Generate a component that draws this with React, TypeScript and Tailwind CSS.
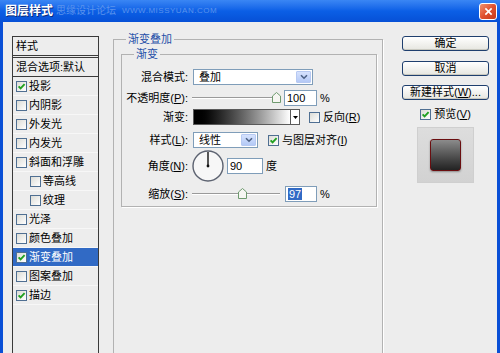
import clsx from 'clsx'

const font = "font-['Liberation_Sans','Noto_Sans_CJK_SC',sans-serif]"

const CheckBox = ({ checked, className }: { checked?: boolean; className?: string }) => (
  <span
    className={clsx(
      'inline-flex h-[11px] w-[11px] shrink-0 items-center justify-center border border-[#4f6f92] bg-gradient-to-br from-[#dcdcd6] to-white',
      className
    )}
  >
    {checked && (
      <svg viewBox="0 0 9 9" className="h-[9px] w-[9px]">
        <path d="M1.6 4.3 L3.6 6.4 L7.6 2.2" stroke="#21a121" strokeWidth="1.9" fill="none" />
      </svg>
    )}
  </span>
)

const Key = ({ k }: { k: string }) => (
  <>
    (<u>{k}</u>)
  </>
)

const Chevron = () => (
  <span className="flex h-full w-[15px] items-center justify-center rounded-[1px] border border-[#b7c9f2] bg-gradient-to-b from-[#d6e2fd] to-[#b4c9f6]">
    <svg viewBox="0 0 8 6" className="h-[6px] w-[8px]">
      <path d="M1 1.2 L4 4.2 L7 1.2" stroke="#4d6185" strokeWidth="1.6" fill="none" />
    </svg>
  </span>
)

const Select = ({ value, className }: { value: string; className: string }) => (
  <div
    className={clsx(
      'flex h-[16px] items-center justify-between border border-[#7f9db9] bg-white p-[1px]',
      className
    )}
  >
    <span className="pl-[4px] leading-none">{value}</span>
    <Chevron />
  </div>
)

const Field = ({ value, className, selected }: { value: string; className: string; selected?: boolean }) => (
  <div className={clsx('flex h-[16px] items-center border border-[#7f9db9] bg-white pl-[2px]', className)}>
    <span className={clsx('leading-[12px]', selected && 'bg-[#316ac5] px-[1px] text-white')}>{value}</span>
  </div>
)

const Slider = ({ pos }: { pos: number }) => (
  <div className="relative ml-[4px] h-[16px] w-[88px]">
    <div className="absolute top-[7px] right-0 left-0 h-[2px] border-t border-[#9a9a9a] border-b border-b-white" />
    <svg viewBox="0 0 9 11" className="absolute top-[2px] h-[11px] w-[9px]" style={{ left: pos }}>
      <path d="M0.5 4 L4.5 0.5 L8.5 4 L8.5 10.5 L0.5 10.5 Z" fill="#f6f6f2" stroke="#6f9a6f" />
    </svg>
  </div>
)

const Label = ({ children }: { children: React.ReactNode }) => (
  <span className="w-[66px] shrink-0 text-right leading-none whitespace-nowrap">{children}</span>
)

const Item = ({
  label,
  checked,
  indent,
  active
}: {
  label: string
  checked?: boolean
  indent?: boolean
  active?: boolean
}) => (
  <div
    className={clsx(
      'flex h-[19px] items-center gap-[2px] border-b border-[#f7f7f7]',
      indent ? 'pl-[17px]' : 'pl-[3px]',
      active && 'bg-[#316ac5] text-white'
    )}
  >
    <CheckBox checked={checked} />
    <span className="leading-none">{label}</span>
  </div>
)

const Button = ({ children }: { children: React.ReactNode }) => (
  <div className="flex h-[15px] w-[87px] items-center justify-center rounded-[3px] border border-[#1f3f6e] bg-gradient-to-b from-white to-[#e6e6e0] leading-none shadow-[inset_0_-1px_0_#c9c9c0]">
    {children}
  </div>
)

export default function App() {
  return (
    <div className={clsx('flex h-[353px] w-[500px] flex-col overflow-hidden text-[11px] text-black', font)}>
      {/* title bar */}
      <div className="flex h-[22px] shrink-0 items-center bg-gradient-to-b from-[#3a86f4] via-[#0b5fe6] to-[#0750d6] pr-[3px] pl-[5px]">
        <span className="text-[12px] leading-none font-bold text-white [text-shadow:1px_1px_0_#0a2a7a]">
          图层样式
        </span>
        <span className="ml-[3px] text-[10px] leading-none text-[#5b93ec]">思缘设计论坛</span>
        <span className="ml-[6px] text-[8px] leading-none tracking-[0.5px] text-[#5b93ec]">
          WWW.MISSYUAN.COM
        </span>
        <div className="ml-auto flex h-[17px] w-[18px] items-center justify-center rounded-[3px] border border-white bg-gradient-to-br from-[#f0906e] via-[#e0512f] to-[#c53a1c]">
          <svg viewBox="0 0 10 10" className="h-[9px] w-[9px]">
            <path d="M1.5 1.5 L8.5 8.5 M8.5 1.5 L1.5 8.5" stroke="white" strokeWidth="1.8" />
          </svg>
        </div>
      </div>

      {/* body */}
      <div className="flex flex-1 border-x-[3px] border-[#0a4fd6] bg-[#ededed]">
        {/* style list */}
        <div className="mt-[14px] ml-[9px] flex h-[330px] w-[87px] shrink-0 flex-col border border-[#3a3a3a]">
          <div className="flex h-[19px] items-center border-b border-[#3a3a3a] pl-[3px] leading-none">
            样式
          </div>
          <div className="mt-[1px] flex h-[20px] items-center border-y border-[#3a3a3a] pl-[3px] leading-none">
            混合选项:默认
          </div>
          <Item label="投影" checked />
          <Item label="内阴影" />
          <Item label="外发光" />
          <Item label="内发光" />
          <Item label="斜面和浮雕" />
          <Item label="等高线" indent />
          <Item label="纹理" indent />
          <Item label="光泽" />
          <Item label="颜色叠加" />
          <Item label="渐变叠加" checked active />
          <Item label="图案叠加" />
          <Item label="描边" checked />
        </div>

        {/* settings */}
        <fieldset className="mt-[10px] ml-[14px] h-[340px] w-[270px] shrink-0 border border-[#b2b2b2] shadow-[1px_1px_0_#fff]">
          <legend className="ml-[12px] px-[2px] leading-[14px] text-[#1f4fa8]">渐变叠加</legend>
          <fieldset className="mt-[1px] ml-[7px] w-[256px] border border-[#b2b2b2] pt-[8px] pb-[4px] shadow-[1px_1px_0_#fff]">
            <legend className="ml-[12px] px-[2px] leading-[14px] text-[#1f4fa8]">渐变</legend>

            <div className="flex h-[16px] items-center">
              <Label>混合模式:</Label>
              <Select value="叠加" className="ml-[5px] w-[120px]" />
            </div>

            <div className="mt-[5px] flex h-[16px] items-center">
              <Label>
                不透明度<Key k="P" />:
              </Label>
              <Slider pos={80} />
              <Field value="100" className="ml-[4px] w-[33px]" />
              <span className="ml-[3px] leading-none">%</span>
            </div>

            <div className="mt-[3px] flex h-[16px] items-center">
              <Label>渐变:</Label>
              <div className="ml-[5px] flex h-[16px] border border-[#5a5a5a]">
                <div className="w-[96px] bg-gradient-to-r from-black to-white" />
                <div className="flex w-[9px] items-center justify-center border-l border-[#5a5a5a] bg-white">
                  <svg viewBox="0 0 5 3" className="h-[3px] w-[5px]">
                    <path d="M0 0 L5 0 L2.5 3 Z" fill="#000" />
                  </svg>
                </div>
              </div>
              <CheckBox className="ml-[9px]" />
              <span className="ml-[3px] leading-none">
                反向<Key k="R" />
              </span>
            </div>

            <div className="mt-[7px] flex h-[16px] items-center">
              <Label>
                样式<Key k="L" />:
              </Label>
              <Select value="线性" className="ml-[5px] w-[65px]" />
              <CheckBox checked className="ml-[10px]" />
              <span className="ml-[3px] leading-none">
                与图层对齐<Key k="I" />
              </span>
            </div>

            <div className="mt-[2px] flex h-[32px] items-center">
              <Label>
                角度<Key k="N" />:
              </Label>
              <svg viewBox="0 0 32 32" className="ml-[4px] h-[32px] w-[32px]">
                <circle cx="16" cy="16" r="15" fill="#f7f7f7" stroke="#5c6270" strokeWidth="1.4" />
                <path d="M16 16 L16 2" stroke="#111" strokeWidth="1.4" />
                <circle cx="16" cy="16" r="1.4" fill="#111" />
              </svg>
              <Field value="90" className="ml-[3px] w-[36px]" />
              <span className="ml-[3px] leading-none">度</span>
            </div>

            <div className="mt-[4px] flex h-[16px] items-center">
              <Label>
                缩放<Key k="S" />:
              </Label>
              <Slider pos={46} />
              <Field value="97" selected className="ml-[5px] w-[32px]" />
              <span className="ml-[3px] leading-none">%</span>
            </div>
          </fieldset>
        </fieldset>

        {/* buttons */}
        <div className="mt-[14px] ml-[19px] flex w-[87px] shrink-0 flex-col items-center">
          <Button>确定</Button>
          <div className="mt-[10px]">
            <Button>取消</Button>
          </div>
          <div className="mt-[9px]">
            <Button>
              新建样式<Key k="W" />
              ...
            </Button>
          </div>
          <div className="mt-[8px] flex h-[12px] items-center gap-[3px]">
            <CheckBox checked />
            <span className="leading-none">
              预览<Key k="V" />
            </span>
          </div>
          <div className="mt-[7px] flex h-[56px] w-[57px] items-center justify-center border border-[#cfcfcf] bg-gradient-to-b from-[#dddddd] to-[#d2d2d2]">
            <div className="h-[32px] w-[31px] rounded-[3px] border-[1.5px] border-[#6a0e10] bg-gradient-to-b from-[#8c8c8c] to-[#232323] shadow-[0_1px_2px_rgba(0,0,0,0.35)]" />
          </div>
        </div>
      </div>
    </div>
  )
}
